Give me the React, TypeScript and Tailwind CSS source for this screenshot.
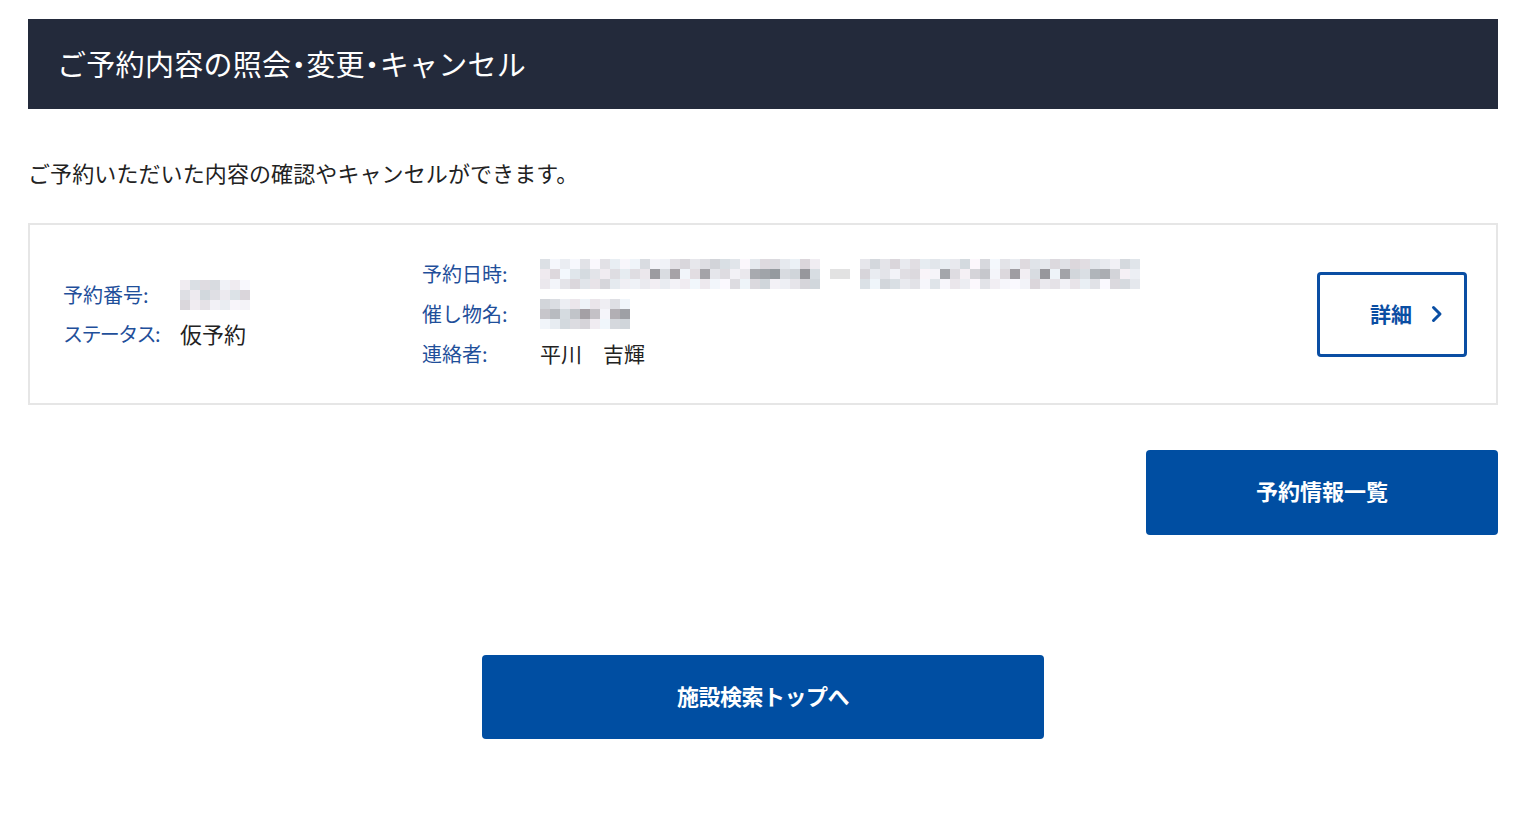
import React from "react";

const FONT = { fontFamily: '"Noto Sans CJK JP", "Noto Sans", sans-serif' };

function rand(seed: number) {
  let s = seed;
  return () => {
    s = (s * 9301 + 49297) % 233280;
    return s / 233280;
  };
}

function Mosaic({ cols, rows, seed, dark = 0 }: { cols: number; rows: number; seed: number; dark?: number }) {
  const r = rand(seed);
  const cells: string[] = [];
  for (let y = 0; y < rows; y++) {
    for (let x = 0; x < cols; x++) {
      let base = 212 + Math.floor(r() * 38);
      if (y === 1 && r() < 0.2 + dark) base = 150 + Math.floor(r() * 50);
      const tint = Math.floor(r() * 12) - 6;
      cells.push(`rgb(${base + tint},${base},${Math.min(255, base + 5)})`);
    }
  }
  return (
    <div className="grid" style={{ gridTemplateColumns: `repeat(${cols}, 10px)` }}>
      {cells.map((c, i) => (
        <div key={i} className="h-[10px] w-[10px]" style={{ background: c }} />
      ))}
    </div>
  );
}

function Dot() {
  return <span className="[font-feature-settings:'palt']">・</span>;
}

export default function App() {
  return (
    <div className="min-h-[832px] bg-white text-[#222]" style={FONT}>
      <div className="ml-[28px] w-[1470px] pt-[19px]">
        <div className="flex h-[90px] items-center bg-[#232a3b] pl-[29px] pb-[1px]">
          <h1 className="text-[29px] font-normal text-white tracking-[0.3px]">
            ご予約内容の照会<Dot />変更<Dot />キャンセル
          </h1>
        </div>

        <p className="mt-[48px] text-[22px] leading-[30px] text-[#222] tracking-[0.1px]">ご予約いただいた内容の確認やキャンセルができます。</p>

        <div className="mt-[36px] flex h-[182px] items-center border-2 border-[#e6e6e6] pl-[33px] pr-[29px]">
          <div className="w-[359px] flex flex-col gap-[9px]">
            <div className="flex items-center h-[30px]">
              <span className="w-[117px] text-[20px] text-[#1f4f9a]">予約番号:</span>
              <Mosaic cols={7} rows={3} seed={11} />
            </div>
            <div className="flex items-center h-[30px]">
              <span className="w-[117px] text-[20px] text-[#1f4f9a] tracking-[-1.6px]">ステータス:</span>
              <span className="text-[22px]">仮予約</span>
            </div>
          </div>

          <div className="flex flex-1 flex-col gap-[10px]">
            <div className="flex items-center h-[30px]">
              <span className="w-[118px] text-[20px] text-[#1f4f9a]">予約日時:</span>
              <Mosaic cols={28} rows={3} seed={3} />
              <div className="mx-[10px] h-[10px] w-[20px] bg-[#e2e2e2]" />
              <Mosaic cols={28} rows={3} seed={7} />
            </div>
            <div className="flex items-center h-[30px]">
              <span className="w-[118px] text-[20px] text-[#1f4f9a]">催し物名:</span>
              <Mosaic cols={9} rows={3} seed={21} dark={0.5} />
            </div>
            <div className="flex items-center h-[30px]">
              <span className="w-[118px] text-[20px] text-[#1f4f9a]">連絡者:</span>
              <span className="text-[21px]">平川　吉輝</span>
            </div>
          </div>

          <button className="flex h-[85px] w-[150px] items-center justify-start gap-[19px] rounded-[4px] border-[3px] border-[#0a4ea3] bg-white pl-[50px] text-[21px] font-bold text-[#0a4ea3]">
            <span>詳細</span>
            <svg width="12" height="18" viewBox="0 0 12 18" fill="none">
              <path d="M2.5 2.5 L9 9 L2.5 15.5" stroke="#0a4ea3" strokeWidth="3" strokeLinecap="round" strokeLinejoin="round" />
            </svg>
          </button>
        </div>

        <div className="mt-[45px] flex justify-end">
          <button className="h-[85px] w-[352px] rounded-[4px] bg-[#004ea2] pb-[4px] text-[22px] font-bold text-white">予約情報一覧</button>
        </div>

        <div className="mt-[120px] flex justify-center">
          <button className="h-[84px] w-[562px] rounded-[4px] bg-[#004ea2] pb-[3px] text-[22px] font-bold text-white tracking-[-0.5px]">施設検索トップへ</button>
        </div>
      </div>
    </div>
  );
}
